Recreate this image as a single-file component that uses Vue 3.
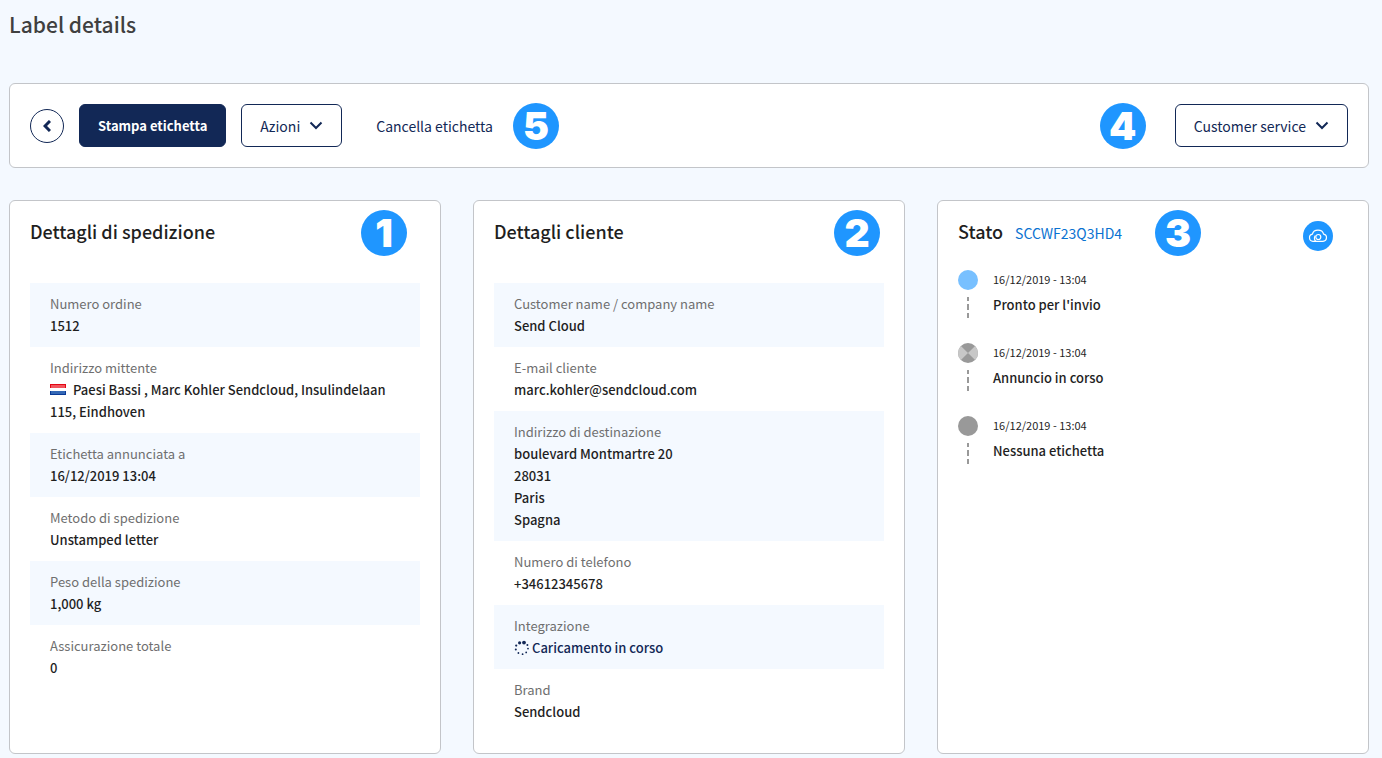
<script setup>
const shipment = [
  { label: 'Numero ordine', lines: ['1512'] },
  { label: 'Indirizzo mittente', flag: true, lines: ['Paesi Bassi , Marc Kohler Sendcloud, Insulindelaan 115, Eindhoven'] },
  { label: 'Etichetta annunciata a', lines: ['16/12/2019 13:04'] },
  { label: 'Metodo di spedizione', lines: ['Unstamped letter'] },
  { label: 'Peso della spedizione', lines: ['1,000 kg'] },
  { label: 'Assicurazione totale', lines: ['0'] },
]
const customer = [
  { label: 'Customer name / company name', lines: ['Send Cloud'] },
  { label: 'E-mail cliente', lines: ['marc.kohler@sendcloud.com'] },
  { label: 'Indirizzo di destinazione', lines: ['boulevard Montmartre 20', '28031', 'Paris', 'Spagna'] },
  { label: 'Numero di telefono', lines: ['+34612345678'] },
  { label: 'Integrazione', loading: true, lines: ['Caricamento in corso'] },
  { label: 'Brand', lines: ['Sendcloud'] },
]
const cards = [
  { title: 'Dettagli di spedizione', badge: '1', rows: shipment },
  { title: 'Dettagli cliente', badge: '2', rows: customer },
]
const history = [
  { kind: 'ready', date: '16/12/2019 - 13:04', text: "Pronto per l'invio" },
  { kind: 'busy', date: '16/12/2019 - 13:04', text: 'Annuncio in corso' },
  { kind: 'none', date: '16/12/2019 - 13:04', text: 'Nessuna etichetta' },
]
const spinner = [
  [10, 2.6, 1.9], [13.4, 5, 1], [14, 8.6, 0.9], [12.2, 12.4, 0.9], [8.6, 14.2, 0.9],
  [4.4, 13, 0.9], [1.8, 9.6, 1], [2.2, 5.6, 1.1], [5.6, 2.8, 1.6],
]
</script>

<template>
  <main class="page">
    <h1>Label details</h1>

    <section class="panel toolbar">
      <button class="back" type="button" aria-label="Indietro">
        <svg width="8" height="12" viewBox="0 0 8 12"><path d="M7 1 2 6l5 5" /></svg>
      </button>
      <button class="btn primary" type="button">Stampa etichetta</button>
      <button class="btn" type="button">
        Azioni
        <svg width="14" height="9" viewBox="0 0 14 9"><path d="m1.500 1.500 5.500 5.500 5.500-5.500" /></svg>
      </button>
      <button class="btn plain" type="button">Cancella etichetta</button>
      <span class="badge">5</span>
      <span class="badge push">4</span>
      <button class="btn service" type="button">
        Customer service
        <svg width="14" height="9" viewBox="0 0 14 9"><path d="m1.500 1.500 5.500 5.500 5.500-5.500" /></svg>
      </button>
    </section>

    <div class="cards">
      <section v-for="card in cards" :key="card.badge" class="panel card">
        <header>
          <h2>{{ card.title }}</h2>
          <span class="badge over" :class="'over-' + card.badge">{{ card.badge }}</span>
        </header>
        <dl>
          <div v-for="row in card.rows" :key="row.label" class="row">
            <dt>{{ row.label }}</dt>
            <dd v-for="line in row.lines" :key="line" :class="{ loading: row.loading }">
              <svg v-if="row.flag" class="flag" width="16" height="11" viewBox="0 0 16 11">
                <rect width="16" height="4" fill="#e40613" />
                <rect x="1" y="1" width="14" height="3" fill="#f1555d" />
                <rect y="4" width="16" height="4" fill="#fff" />
                <rect x="0" y="7" width="16" height="4" fill="#0a3a97" />
                <rect x="1" y="7" width="14" height="3" fill="#3468b6" />
              </svg>
              <svg v-if="row.loading" class="spin" width="16" height="16" viewBox="0 0 16 16">
                <circle v-for="(d, i) in spinner" :key="i" :cx="d[0]" :cy="d[1]" :r="d[2]" />
              </svg>{{ line }}
            </dd>
          </div>
        </dl>
      </section>

      <section class="panel card">
        <header class="status">
          <h2>Stato</h2>
          <a href="#">SCCWF23Q3HD4</a>
          <span class="badge over over-3">3</span>
          <button class="cloud" type="button" aria-label="Sendcloud">
            <svg width="20" height="14" viewBox="0 0 20 14">
              <path d="M12.800 12.400H5a3.700 3.700 0 0 1-.6-7.300C5 2.700 7.200 1.200 10 1.200s5 1.500 5.600 3.900a3.700 3.700 0 0 1-.6 7.300h-2.200" />
              <circle cx="10.300" cy="8" r="2.500" />
              <path d="M8 12.400C6.300 11.300 5.800 8.600 7.300 6.500" />
            </svg>
          </button>
        </header>
        <ol class="timeline">
          <li v-for="step in history" :key="step.kind">
            <span class="mark">
              <svg width="20" height="20" viewBox="0 0 20 20">
                <circle cx="10" cy="10" r="10" :class="step.kind" />
                <path v-if="step.kind === 'busy'" d="M10 10 2.930 2.930a10 10 0 0 0 0 14.140ZM10 10l7.070-7.070a10 10 0 0 1 0 14.140Z" fill="#c7c7c7" />
              </svg>
              <svg width="2" height="21" viewBox="0 0 2 21"><path class="dash" d="M1 0v21" /></svg>
            </span>
            <div>
              <time>{{ step.date }}</time>
              <p>{{ step.text }}</p>
            </div>
          </li>
        </ol>
      </section>
    </div>
  </main>
</template>

<style>
body {
  background: #f4f9ff;
}
</style>

<style scoped>
.page {
  box-sizing: border-box;
  min-height: 100vh;
  padding: 9px 13px 4px 9px;
  display: flex;
  flex-direction: column;
  background: #f4f9ff;
  color: #1f1f1f;
  font: 500 13px/22px "Noto Sans CJK SC", "Noto Sans", sans-serif;
}
h1, h2, p, dl, dd, ol {
  margin: 0;
  padding: 0;
}
h1 {
  margin-bottom: 44px;
  color: #404040;
  font-size: 21px;
  font-weight: 500;
  line-height: 30px;
}
h2 {
  font-size: 18px;
  font-weight: 500;
  line-height: 20px;
}
.panel {
  box-sizing: border-box;
  border: 1px solid #c3c5c9;
  border-radius: 6px;
  background: #fff;
  padding: 20px;
}
.toolbar {
  display: flex;
  align-items: center;
  gap: 15px;
  margin-bottom: 32px;
}
button {
  margin: 0;
  cursor: pointer;
  font: inherit;
}
.back {
  width: 34px;
  height: 34px;
  padding: 0;
  display: grid;
  place-items: center;
  border: 1px solid #122856;
  border-radius: 50%;
  background: #fff;
}
.btn {
  height: 43px;
  padding: 0 18px;
  display: flex;
  align-items: center;
  gap: 9px;
  border: 1px solid #122856;
  border-radius: 6px;
  background: #fff;
  color: #122856;
  font-size: 14px;
  font-weight: 400;
  line-height: 20px;
  white-space: nowrap;
}
.btn svg, .back svg {
  fill: none;
  stroke: #122856;
  stroke-width: 2;
}
.back svg {
  stroke-width: 3;
}
.primary {
  background: #122856;
  color: #fff;
  font-size: 13px;
  font-weight: 700;
}
.plain {
  border-color: transparent;
  padding-right: 4px;
}
.badge {
  flex: none;
  width: 46px;
  height: 46px;
  margin: -2px 0;
  border-radius: 50%;
  background: #1f96ff;
  color: #fff;
  font: 900 39px/46px Inter, sans-serif;
  text-align: center;
}
.push {
  margin-left: auto;
}
.service {
  margin-left: 14px;
}
.cards {
  flex: 1;
  display: grid;
  grid-template-columns: repeat(3, 1fr);
  gap: 32px;
}
header {
  position: relative;
  margin-bottom: 42px;
}
.over {
  position: absolute;
  top: -11px;
  margin: 0;
}
.over-1 { right: 13px; }
.over-2 { right: 4px; }
.over-3 { left: 197px; }
.row {
  padding: 10px 20px;
}
.row:nth-child(odd) {
  background: #f4f9ff;
}
dt {
  color: #6f6f6f;
  font-weight: 400;
}
.flag {
  margin-right: 7px;
}
.loading {
  color: #122856;
}
.spin {
  margin-right: 2px;
  vertical-align: -3px;
  fill: #122856;
}
.status {
  display: flex;
  align-items: baseline;
  gap: 12px;
  margin-bottom: 29px;
}
a {
  color: #0a72d1;
  font-size: 14px;
  font-weight: 400;
  line-height: 16px;
  text-decoration: none;
}
.cloud {
  align-self: flex-start;
  width: 30px;
  height: 30px;
  margin: 0 15px -10px auto;
  padding: 0;
  display: grid;
  place-items: center;
  border: 0;
  border-radius: 50%;
  background: #1f96ff;
}
.cloud svg {
  fill: none;
  stroke: #fff;
  stroke-width: 1.2;
}
.timeline {
  list-style: none;
}
li {
  display: flex;
  gap: 15px;
  height: 73px;
}
.mark {
  display: flex;
  flex-direction: column;
  align-items: center;
  gap: 7px;
}
.ready { fill: #78c0ff; }
.busy, .none { fill: #999; }
.dash {
  stroke: #999;
  stroke-width: 2;
  stroke-dasharray: 4 3 6 3 5;
}
time {
  display: block;
  font-size: 11px;
  font-weight: 400;
  line-height: 18px;
}
li p {
  margin-top: 6px;
}
</style>
